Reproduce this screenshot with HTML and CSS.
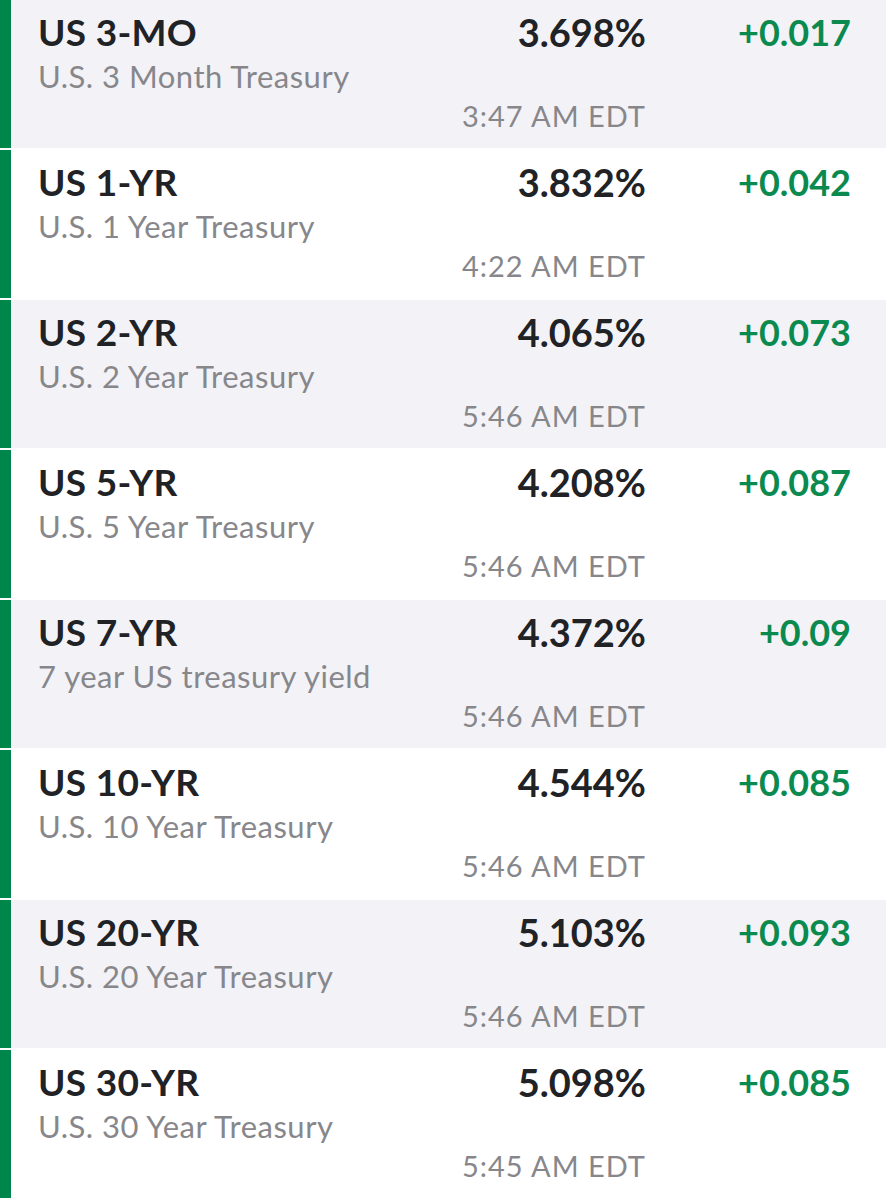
FILE: index.html
```html
<!DOCTYPE html>
<html lang="en">
<head>
    <meta charset="UTF-8">
    <meta name="viewport" content="width=device-width, initial-scale=1.0">
    <title>US Treasuries</title>
    <link rel="stylesheet" href="styles.css">
</head>
<body>
    <div class="quotes">
        <div class="quote alt">
            <div class="symbol">US 3-MO</div>
            <div class="desc">U.S. 3 Month Treasury</div>
            <div class="last">3.698%</div>
            <div class="change up">+0.017</div>
            <div class="time">3:47 AM EDT</div>
        </div>
        <div class="quote">
            <div class="symbol">US 1-YR</div>
            <div class="desc">U.S. 1 Year Treasury</div>
            <div class="last">3.832%</div>
            <div class="change up">+0.042</div>
            <div class="time">4:22 AM EDT</div>
        </div>
        <div class="quote alt">
            <div class="symbol">US 2-YR</div>
            <div class="desc">U.S. 2 Year Treasury</div>
            <div class="last">4.065%</div>
            <div class="change up">+0.073</div>
            <div class="time">5:46 AM EDT</div>
        </div>
        <div class="quote">
            <div class="symbol">US 5-YR</div>
            <div class="desc">U.S. 5 Year Treasury</div>
            <div class="last">4.208%</div>
            <div class="change up">+0.087</div>
            <div class="time">5:46 AM EDT</div>
        </div>
        <div class="quote alt">
            <div class="symbol">US 7-YR</div>
            <div class="desc">7 year US treasury yield</div>
            <div class="last">4.372%</div>
            <div class="change up">+0.09</div>
            <div class="time">5:46 AM EDT</div>
        </div>
        <div class="quote">
            <div class="symbol">US 10-YR</div>
            <div class="desc">U.S. 10 Year Treasury</div>
            <div class="last">4.544%</div>
            <div class="change up">+0.085</div>
            <div class="time">5:46 AM EDT</div>
        </div>
        <div class="quote alt">
            <div class="symbol">US 20-YR</div>
            <div class="desc">U.S. 20 Year Treasury</div>
            <div class="last">5.103%</div>
            <div class="change up">+0.093</div>
            <div class="time">5:46 AM EDT</div>
        </div>
        <div class="quote">
            <div class="symbol">US 30-YR</div>
            <div class="desc">U.S. 30 Year Treasury</div>
            <div class="last">5.098%</div>
            <div class="change up">+0.085</div>
            <div class="time">5:45 AM EDT</div>
        </div>
    </div>
</body>
</html>
```

FILE: styles.css
```css
body {
    margin: 0;
    background: #fff;
    font-family: Lato, "Liberation Sans", sans-serif;
}
.quotes {
    display: flex;
    flex-direction: column;
    gap: 2px;
}
.quote {
    display: grid;
    grid-template-columns: 1fr 260px 205px;
    grid-template-rows: 44px 44px 36px;
    grid-template-areas:
        "symbol last change"
        "desc desc ."
        ". time .";
    height: 148px;
    box-sizing: border-box;
    padding: 10px 35px 14px 27px;
    background: #fff;
    border-left: 11px solid #00864b;
}
.quote.alt { background: #f3f3f7; }
.symbol {
    grid-area: symbol;
    font-size: 37px;
    line-height: 44px;
    font-weight: 700;
    color: #202226;
    letter-spacing: 0.3px;
}
.desc {
    grid-area: desc;
    font-size: 31px;
    line-height: 44px;
    color: #87878b;
    letter-spacing: 0.5px;
}
.last {
    grid-area: last;
    text-align: right;
    font-size: 38px;
    line-height: 44px;
    font-weight: 700;
    color: #202226;
}
.change {
    grid-area: change;
    text-align: right;
    font-size: 36px;
    line-height: 44px;
    font-weight: 700;
}
.change.up { color: #0b8a4f; }
.time {
    grid-area: time;
    text-align: right;
    font-size: 29px;
    line-height: 36px;
    color: #87878b;
    letter-spacing: 1px;
}
```
